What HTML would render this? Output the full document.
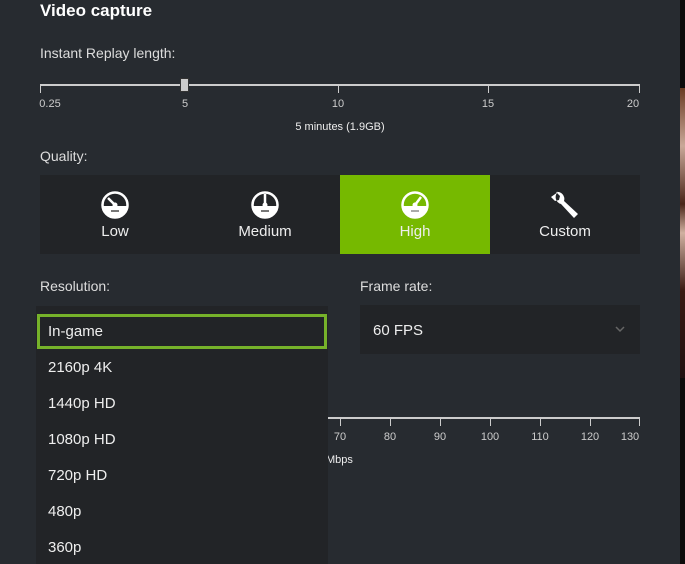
<!DOCTYPE html><html><head><style>
body{margin:0;width:685px;height:564px;background:#272b30;font-family:"Liberation Sans",sans-serif;color:#eee;position:relative;overflow:hidden}
.a{position:absolute}
.t{font-size:14px;color:#ddd}
.tile{position:absolute;top:175px;width:150px;height:79px;background:#222427;text-align:center;font-size:15px;color:#eee}
.tile svg{position:absolute;left:60px;top:15px}
.tile span{position:absolute;left:0;right:0;top:48px}
.opt{position:absolute;left:48px;font-size:15px;color:#eee}
.tick{position:absolute;width:1px;background:#ccc}
.lab{position:absolute;font-size:11px;color:#ccc;transform:translateX(-50%)}
</style></head><body>
<div class="a" style="left:680px;top:0;width:5px;height:564px;background:#0d0b0b"></div>
<div class="a" style="left:680px;top:88px;width:5px;height:290px;background:linear-gradient(#6a3a22,#c9a898 20%,#4a2418 40%,#d0b0a0 50%,#3a1a12 70%,#201010)"></div>
<div class="a" style="left:40px;top:1px;font-size:17px;font-weight:bold;color:#fff">Video capture</div>
<div class="a t" style="left:40px;top:45px">Instant Replay length:</div>
<div class="a" style="left:40px;top:84px;width:600px;height:2px;background:#ccc"></div>
<div class="tick" style="left:40px;top:84px;height:9px"></div>
<div class="tick" style="left:338px;top:84px;height:9px"></div>
<div class="tick" style="left:488px;top:84px;height:9px"></div>
<div class="tick" style="left:639px;top:84px;height:9px"></div>
<div class="a" style="left:180px;top:78px;width:7px;height:12px;background:#ccc;border:1px solid #333"></div>
<div class="lab" style="left:50px;top:98px">0.25</div>
<div class="lab" style="left:185px;top:98px">5</div>
<div class="lab" style="left:338px;top:98px">10</div>
<div class="lab" style="left:488px;top:98px">15</div>
<div class="lab" style="left:633px;top:98px">20</div>
<div class="lab" style="left:340px;top:121px;color:#eee">5 minutes (1.9GB)</div>
<div class="a t" style="left:40px;top:148px">Quality:</div>
<div class="tile" style="left:40px"><svg width="30" height="30" viewBox="0 0 30 30"><circle cx="15" cy="15" r="12.5" fill="none" stroke="#fff" stroke-width="2.5"/><path d="M2.5 16A12.5 12.5 0 0 0 27.5 16Z" fill="#fff"/><path d="M15 15L8 8" stroke="#fff" stroke-width="2.5"/><circle cx="15" cy="15" r="2.5" fill="#fff"/><rect x="11" y="20" width="8" height="2" fill="#777"/></svg><span>Low</span></div>
<div class="tile" style="left:190px"><svg width="30" height="30" viewBox="0 0 30 30"><circle cx="15" cy="15" r="12.5" fill="none" stroke="#fff" stroke-width="2.5"/><path d="M2.5 16A12.5 12.5 0 0 0 27.5 16Z" fill="#fff"/><path d="M15 15V4" stroke="#fff" stroke-width="2.5"/><circle cx="15" cy="15" r="2.5" fill="#fff"/><rect x="11" y="20" width="8" height="2" fill="#777"/></svg><span>Medium</span></div>
<div class="tile" style="left:340px;background:#76b900"><svg width="30" height="30" viewBox="0 0 30 30"><circle cx="15" cy="15" r="12.5" fill="none" stroke="#fff" stroke-width="2.5"/><path d="M2.5 16A12.5 12.5 0 0 0 27.5 16Z" fill="#fff"/><path d="M15 15L21 7" stroke="#fff" stroke-width="2.5"/><circle cx="15" cy="15" r="2.5" fill="#fff"/><rect x="11" y="20" width="8" height="2" fill="#aaa"/></svg><span>High</span></div>
<div class="tile" style="left:490px"><svg width="30" height="30" viewBox="0 0 30 30"><path d="M8 2a7 7 0 0 0 3 12l13 14 4-4-14-13a7 7 0 0 0-8-9l4 4-1 4-4 1-4-4a7 7 0 0 0 0 0z" fill="#fff"/></svg><span>Custom</span></div>
<div class="a t" style="left:40px;top:278px">Resolution:</div>
<div class="a t" style="left:360px;top:278px">Frame rate:</div>
<div class="a" style="left:360px;top:305px;width:280px;height:49px;background:#222427"></div>
<div class="a" style="left:373px;top:322px;font-size:15px">60 FPS</div>
<svg class="a" style="left:615px;top:326px" width="10" height="7" viewBox="0 0 10 7"><path d="M1 1l4 4 4-4" stroke="#666" stroke-width="1.5" fill="none"/></svg>
<div class="a" style="left:327px;top:417px;width:312px;height:2px;background:#ccc"></div>
<div class="tick" style="left:340px;top:417px;height:9px"></div>
<div class="tick" style="left:390px;top:417px;height:9px"></div>
<div class="tick" style="left:440px;top:417px;height:9px"></div>
<div class="tick" style="left:490px;top:417px;height:9px"></div>
<div class="tick" style="left:540px;top:417px;height:9px"></div>
<div class="tick" style="left:590px;top:417px;height:9px"></div>
<div class="tick" style="left:639px;top:417px;height:9px"></div>
<div class="lab" style="left:340px;top:431px">70</div>
<div class="lab" style="left:390px;top:431px">80</div>
<div class="lab" style="left:440px;top:431px">90</div>
<div class="lab" style="left:490px;top:431px">100</div>
<div class="lab" style="left:540px;top:431px">110</div>
<div class="lab" style="left:590px;top:431px">120</div>
<div class="lab" style="left:630px;top:431px">130</div>
<div class="a" style="left:326px;top:454px;font-size:11px;color:#eee">Mbps</div>
<div class="a" style="left:36px;top:306px;width:292px;height:258px;background:#222427"></div>
<div class="a" style="left:37px;top:314px;width:284px;height:29px;border:3px solid #76b22a;background:#222427"></div>
<div class="opt" style="top:323px">In-game</div>
<div class="opt" style="top:359px">2160p 4K</div>
<div class="opt" style="top:395px">1440p HD</div>
<div class="opt" style="top:431px">1080p HD</div>
<div class="opt" style="top:467px">720p HD</div>
<div class="opt" style="top:503px">480p</div>
<div class="opt" style="top:539px">360p</div>
</body></html>
